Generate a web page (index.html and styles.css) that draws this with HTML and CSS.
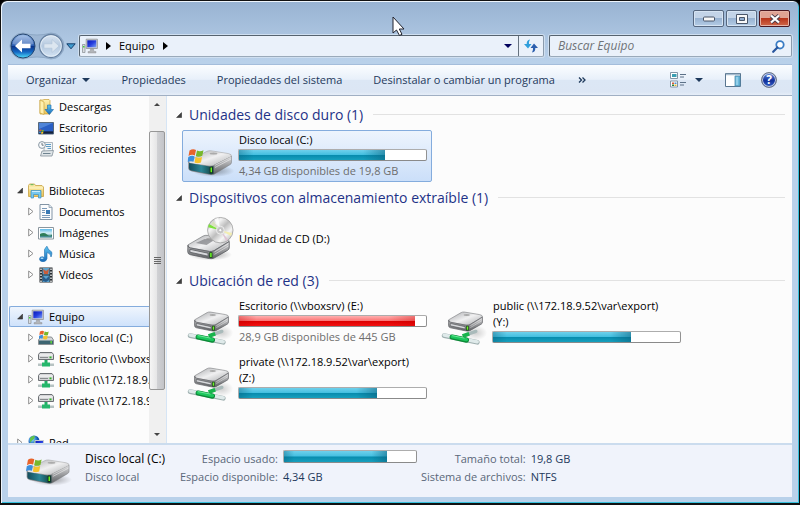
FILE: index.html
```html
<!DOCTYPE html>
<html lang="es">
<head>
<meta charset="utf-8">
<meta name="viewport" content="width=device-width, initial-scale=1">
<title>Equipo</title>
<link rel="stylesheet" href="styles.css">
</head>
<body>
<svg class="sprite" aria-hidden="true">
  <defs>
    <linearGradient id="silverTop" x1="0" y1="0" x2="1" y2="1"><stop offset="0" stop-color="#a5a7aa"/><stop offset=".5" stop-color="#f0f0f1"/><stop offset="1" stop-color="#a9abad"/></linearGradient>
    <linearGradient id="silverSide" x1="0" y1="0" x2="0" y2="1"><stop offset="0" stop-color="#dadadc"/><stop offset="1" stop-color="#5c5e61"/></linearGradient>
    <linearGradient id="teal" x1="0" y1="0" x2="1" y2="0"><stop offset="0" stop-color="#144c5c"/><stop offset=".5" stop-color="#2a8596"/><stop offset="1" stop-color="#123d3b"/></linearGradient>
    <linearGradient id="folder" x1="0" y1="0" x2="0" y2="1"><stop offset="0" stop-color="#fff2b4"/><stop offset="1" stop-color="#e8c257"/></linearGradient>
    <linearGradient id="screen" x1="0" y1="0" x2="1" y2="1"><stop offset="0" stop-color="#0a1bb5"/><stop offset=".5" stop-color="#263ee0"/><stop offset="1" stop-color="#7fa4f4"/></linearGradient>
    <linearGradient id="disc" x1="0" y1="0" x2="1" y2="1"><stop offset="0" stop-color="#aaa"/><stop offset=".3" stop-color="#f4f4f4"/><stop offset=".5" stop-color="#bdbdbd"/><stop offset=".7" stop-color="#f6f6f6"/><stop offset="1" stop-color="#a5a5a5"/></linearGradient>
    <linearGradient id="orb" x1="0" y1="0" x2="0" y2="1"><stop offset="0" stop-color="#8fb3e3"/><stop offset=".48" stop-color="#2b5cb0"/><stop offset=".5" stop-color="#0c3187"/><stop offset=".75" stop-color="#1468c4"/><stop offset="1" stop-color="#4fe0fb"/></linearGradient>
    <linearGradient id="orbOff" x1="0" y1="0" x2="0" y2="1"><stop offset="0" stop-color="#dbe6f2"/><stop offset=".5" stop-color="#b4c8df"/><stop offset="1" stop-color="#d4e4f4"/></linearGradient>
    <linearGradient id="blue" x1="0" y1="0" x2="0" y2="1"><stop offset="0" stop-color="#5fc4ef"/><stop offset="1" stop-color="#1769b8"/></linearGradient>
    <linearGradient id="landscape" x1="0" y1="0" x2="0" y2="1"><stop offset="0" stop-color="#5db9e8"/><stop offset=".5" stop-color="#d8f1f6"/><stop offset="1" stop-color="#176b72"/></linearGradient>
    <radialGradient id="shade"><stop offset="0" stop-color="#000" stop-opacity=".35"/><stop offset="1" stop-color="#000" stop-opacity="0"/></radialGradient>
    <radialGradient id="globeFill" cx=".35" cy=".35"><stop offset="0" stop-color="#8fe2ff"/><stop offset="1" stop-color="#0b53b0"/></radialGradient>
  </defs>

  <symbol id="flag" viewBox="0 0 16 16">
    <path d="M1.500 2.500Q5 .2 8 2L6.800 7.500Q4 6 .5 8Z" fill="#e8632a"/>
    <path d="M9 2.400Q12 4 15.500 2.200L14.300 7.800Q11 9.500 7.800 8Z" fill="#78b72c"/>
    <path d="M.3 9Q4 7 6.600 8.500L5.500 13.800Q3 12.500-.5 14Z" fill="#3c8fdc"/>
    <path d="M7.600 9Q11 10.500 14 8.900L13 14.400Q9.500 16 6.500 14.500Z" fill="#f6c32c"/>
  </symbol>
  <symbol id="drive" viewBox="0 0 48 30">
    <ellipse cx="27" cy="23" rx="21" ry="6" fill="url(#shade)"/>
    <path d="M2 13 20 3.500Q22 2.500 24 2.700L42 5.600Q45.500 6.300 45 8.500L27 17.500Q25 18.400 22 18L4 15.500Q1.500 15 2 13Z" fill="url(#silverTop)" stroke="#999" stroke-width=".5"/>
    <path d="M2 13.500Q2 15.300 4 15.600L23 18.300Q26 18.500 28 17L45 8.500V14.500Q45 16 43 17L28 26Q26 27 23.500 26.500L5 23Q2 22.300 2 20Z" fill="url(#silverSide)" stroke="#77797b" stroke-width=".5"/>
    <path d="M2.500 15 23 18.600Q25.500 18.800 27 18V25.700Q25 26.400 23 26L5 22.500Q2.500 22 2.500 20Z" fill="url(#teal)"/>
    <path d="M23.200 18.700 26 18.500V25L23.200 25.500Z" fill="#142b16"/><path d="M24 19.500h1.500v4.700H24Z" fill="#67f522"/>
    <path d="M28.500 17.300 44.500 9M28.500 19.500 44.500 11" stroke="#fff" stroke-width=".7" opacity=".7"/>
    <ellipse cx="27" cy="5.500" rx="4" ry="1.300" fill="#aaa" stroke="#ddd" stroke-width=".5"/>
    <use href="#flag" x="1" y="0" width="17" height="16"/>
  </symbol>
  <symbol id="caseBox" viewBox="0 0 46 26">
    <path d="M1.500 11 17 2Q19 1 21 1.300L40 4.500Q44 5.200 43.500 7.500L28 17Q26 18 23 17.600L4 14Q1 13.300 1.500 11Z" fill="url(#silverTop)" stroke="#828487" stroke-width=".8"/>
    <path d="M1.500 11.500Q1.500 13.700 4 14.200L23.500 17.800Q26 18 28 17L43.600 7.600V14Q43.600 15.500 42 16.500L28 24.500Q26 25.500 23.500 25L4 21Q1.300 20.500 1.300 18Z" fill="url(#silverSide)" stroke="#606266" stroke-width=".9"/>
    <path d="M3.500 15.500 22 19.500V22.500L3.500 18.500Z" fill="#d9dadd" stroke="#55575b" stroke-width=".8"/>
    <path d="M23.300 18.500h3.200v5.700h-3.200Z" fill="#174a12"/><path d="M24.100 19.300h1.600v4h-1.600Z" fill="#6df22a"/>
    <path d="M28.500 18.300 43 9.700M28.500 20.700 43 12" stroke="#fff" stroke-width=".7" opacity=".7"/>
    <ellipse cx="24" cy="5" rx="4" ry="1.200" fill="#aaa"/>
  </symbol>
  <symbol id="cd" viewBox="0 0 50 46">
    <ellipse cx="25" cy="39" rx="22" ry="6" fill="url(#shade)"/>
    <use href="#caseBox" x="0" y="18" width="47" height="26"/>
    <path d="m10 27 9-4 10 1-8 5Z" fill="#7c7e81" opacity=".7"/>
    <circle cx="35" cy="14" r="13" fill="url(#disc)" stroke="#9c9c9c" stroke-width=".8"/>
    <path d="M35 14 25.500 8.500 28 5Z" fill="#d9dfc0"/><path d="M35 14 22.500 11 23.500 7.700Z" fill="#7de13b"/><path d="M35 14 47 17 46 20Z" fill="#f3eeb0"/><path d="M35 14 43 23.500 41 25Z" fill="#dfc4d4"/><path d="M35 14 29 3l4-2Z" fill="#fff" opacity=".8"/>
    <circle cx="35" cy="14" r="4" fill="#c8c8c8" stroke="#eee"/><circle cx="35" cy="14" r="1.600" fill="#fff" stroke="#999" stroke-width=".5"/>
  </symbol>
  <symbol id="netDrive" viewBox="0 0 48 38">
    <ellipse cx="36" cy="23" rx="12" ry="8" fill="url(#shade)" opacity=".5"/>
    <path d="m26 25 10-3.500" stroke="#a9baba" stroke-width="3.500" stroke-linecap="round"/>
    <path d="m22 26.500 7-2.500" stroke="#18b44c" stroke-width="4"/>
    <use href="#caseBox" x="6" y="0" width="39" height="22"/>
    <path d="m2.500 26 35 7" stroke="#9fb0b0" stroke-width="5" stroke-linecap="round"/>
    <path d="m2.500 25.500 35 7" stroke="#dfeaea" stroke-width="3.500" stroke-linecap="round"/>
    <path d="m11 27.500 15 3.200" stroke="#0c8a37" stroke-width="5.500" stroke-linecap="round"/>
    <path d="m11 27 15 3.200" stroke="#1cc75d" stroke-width="3.500" stroke-linecap="round"/>
    <path d="m11 26 13 2.600" stroke="#86f0a9" stroke-width=".8"/>
  </symbol>
  <symbol id="computer" viewBox="0 0 16 16">
    <path d="M.5 6.500h2.500v8H.5Z" fill="#d8dce0" stroke="#858b91" stroke-width=".7"/><path d="M1 8h1.500v1.500H1Z" fill="#42d434"/>
    <path d="M4.200 1.200h11.200v9.300H4.200Z" fill="#d0d1d3" stroke="#8e9297" stroke-width=".8"/>
    <path d="M5.300 2.300h9v7h-9Z" fill="url(#screen)"/>
    <path d="M8.500 11h3l.5 2.500h2V15H6v-1.500h2Z" fill="#b2b5b9" stroke="#888b8f" stroke-width=".4"/>
  </symbol>
  <symbol id="downloads" viewBox="0 0 16 16">
    <path d="M2 1h3l1-.5h5l1 1V15H2Z" fill="url(#folder)" stroke="#c79d35" stroke-width=".7"/>
    <path d="m2 1 4 2v12.500L2 14Z" fill="#fff0ae" stroke="#cda640" stroke-width=".7"/>
    <path d="M9.500 6h3.500v4.500h2.500L11.300 15.500 7 10.500h2.500Z" fill="url(#blue)" stroke="#1965a8" stroke-width=".6"/>
  </symbol>
  <symbol id="desktop" viewBox="0 0 16 16">
    <path d="M.5 2.500h15v11.500H.5Z" fill="#1a3574" stroke="#56687c"/><path d="M1 3h14v8.500H1Z" fill="#2a5fc4"/>
    <path d="M1 3h14L1 9Z" fill="#7cb2ef" opacity=".45"/><path d="M1 11.500h14v2H1Z" fill="#15223a"/><use href="#flag" x="1" y="9" width="5" height="5"/>
  </symbol>
  <symbol id="recent" viewBox="0 0 16 16">
    <path d="M6 1.500h8.500v9H6Z" fill="#f1f4f6" stroke="#9aa5ae" stroke-width=".8"/>
    <path d="M8 3.500h5M8 5.500h5M9.500 7.500h3.500" stroke="#5c9bc4"/>
    <path d="m4 10 11.500-.5L14 15H2.500Z" fill="#dfe5e8" stroke="#84919a" stroke-width=".8"/><path d="M5 12.500h7.500" stroke="#6f8390"/>
    <circle cx="4" cy="4" r="3.400" fill="#f8fafc" stroke="#8997a2"/><path d="M4 2v2.200h1.700" fill="none" stroke="#4b5963" stroke-width=".8"/>
  </symbol>
  <symbol id="libraries" viewBox="0 0 16 16">
    <path d="M.5 2.500 1.500 1h5L7.500 2.500H14L15.500 4v9.500H.5Z" fill="url(#folder)" stroke="#c6a142" stroke-width=".8"/>
    <path d="M1 5h14" stroke="#fff8d0"/><path d="M2.500 1.700h3" stroke="#5ab658"/>
    <path d="M3 7.500h10V15h-2.500v-3.500h-5V15H3Z" fill="#76c8ef" stroke="#398fc4" stroke-width=".7"/><path d="M4 8.500h8" stroke="#cbeefe"/>
  </symbol>
  <symbol id="documents" viewBox="0 0 16 16">
    <path d="M2 .5h9L14 3.500v12H2Z" fill="#fbfcfd" stroke="#8294a5"/><path d="M11 .5v3h3" fill="#dbe5ee" stroke="#8294a5" stroke-width=".7"/>
    <path d="M4 4.500h5M4 6.500h3M4 11.500h8M4 13.500h8" stroke="#7b99b8"/><path d="M8 6h4v4H8Z" fill="#3979b5"/><path d="M4 8.500h3" stroke="#7b99b8"/>
  </symbol>
  <symbol id="pictures" viewBox="0 0 16 16">
    <path d="M.5 2.500h15v11.500H.5Z" fill="#fff" stroke="#8b969e"/><path d="M2 4h12v8.500H2Z" fill="url(#landscape)"/>
    <path d="M2 9Q6 7 9 9.500T14 9.500V11H2Z" fill="#2e7d59"/>
  </symbol>
  <symbol id="music" viewBox="0 0 16 16">
    <path d="M6.500 11.500V3.500L8.500.5h.7Q10 4 12.500 5T13 11Q13 7.500 9 6.500v6Q8.500 15.500 5 15.700 1.500 15.500 1.500 13T4.500 10.700Z" fill="url(#blue)" stroke="#1c6fb0" stroke-width=".6"/>
    <ellipse cx="4" cy="12.200" rx="1.500" ry=".8" fill="#b5e5fb"/>
  </symbol>
  <symbol id="videos" viewBox="0 0 16 16">
    <path d="M1.500.500h13v15h-13Z" fill="#292d31"/><path d="M4.500 1h7v6.500h-7ZM4.500 8.500h7V15h-7Z" fill="#5ca4cf"/>
    <path d="m5 2 3 2 3-2-1 5H6Z" fill="#c95d3a"/><path d="m5 9 3 3 3-3v4l-3 2-3-1Z" fill="#275c8c"/>
    <path d="M3 1.500v14M13 1.500v14" stroke="#e5e7e8" stroke-width="1.500" stroke-dasharray="1.500 1.500"/>
  </symbol>
  <symbol id="smallDrive" viewBox="0 0 16 16">
    <path d="m.5 10 2-3h11l2 3v4.500H.5Z" fill="#d2d4d6" stroke="#747a7e" stroke-width=".8"/><path d="M1 10.500h14V14H1Z" fill="#3c6471"/><path d="M12.500 11h1.300v2.500h-1.300Z" fill="#67ed32"/><use href="#flag" x="1" y="0" width="10" height="10"/>
  </symbol>
  <symbol id="smallNet" viewBox="0 0 16 16">
    <path d="m.5 3.500 1.500-2h12l1.500 2v5H.5Z" fill="#d5d6d8" stroke="#6c7074"/><path d="M1.500 4h13" stroke="#fff"/><path d="M2 6.500h8" stroke="#898c8f"/><path d="M11.500 5.500h2v1.800h-2Z" fill="#30b628"/>
    <path d="M6.500 9h3v3h-3Z" fill="#22af66"/><path d="M0 12.500h16V15H0Z" fill="#b6c2c2"/><path d="M4 11.500h8v4H4Z" fill="#25b76c"/>
  </symbol>
  <symbol id="network" viewBox="0 0 16 16">
    <circle cx="6" cy="6" r="5.500" fill="url(#globeFill)"/><path d="M2 3q3-3 5-2L6 4 3.500 6 2 8ZM6 6l3 1-2 4Z" fill="#61c34a"/>
    <path d="M7 5.500h8.500v7H7Z" fill="url(#screen)" stroke="#c4cbd3"/><path d="M9 13h5v2H9Z" fill="#aab0b7"/>
  </symbol>
  <symbol id="open" viewBox="0 0 7 7"><path d="M6.500.7V6.500H.7Z" fill="#404040" stroke="#222" stroke-width=".6"/></symbol>
  <symbol id="closed" viewBox="0 0 6 9"><path d="M.7 1 5 4.500.7 8Z" fill="#fff" stroke="#8f8f8f"/></symbol>
  <symbol id="down" viewBox="0 0 8 4"><path d="M0 0h8L4 4Z" fill="currentColor"/></symbol>
  <symbol id="right" viewBox="0 0 5 8"><path d="M0 0 5 4 0 8Z" fill="currentColor"/></symbol>
</svg>

<div class="window">
  <header class="titlebar">
    <div class="caption">
      <button class="cap" aria-label="Minimizar"><svg width="12" height="6" viewBox="0 0 12 6"><rect x=".5" y="1" width="11" height="4" rx="1" fill="#f8f8f8" stroke="#4a5669"/></svg></button>
      <button class="cap" aria-label="Maximizar"><svg width="12" height="10" viewBox="0 0 12 10"><path d="M.5.500h11v9H.5Z" fill="#f8f8f8" stroke="#4a5669"/><path d="M3.500 3.500h5v3h-5Z" fill="#92aed0" stroke="#4a5669"/></svg></button>
      <button class="cap close" aria-label="Cerrar"><svg width="12" height="10" viewBox="0 0 12 10"><path d="m2 1.500 8 7M10 1.500l-8 7" stroke="#4b3d4b" stroke-width="4"/><path d="m2 1.500 8 7M10 1.500l-8 7" stroke="#fff" stroke-width="2.300"/></svg></button>
    </div>
  </header>
  <svg class="pointer" viewBox="0 0 13 20" aria-hidden="true"><path d="M1 1v16l3.500-3 3 5.500 2.500-1.200L7.300 13H12Z" fill="#fff" stroke="#20232e"/></svg>

  <div class="navrow">
    <div class="history">
      <svg class="orbs" viewBox="0 0 56 28" aria-hidden="true">
        <path d="M14 1Q28 5 42 1a12.500 12.500 0 0 1 0 26Q28 23 14 27A13 13 0 0 1 14 1Z" fill="#9bb4d1" stroke="#7f9ab9" stroke-width=".8" opacity=".8"/>
        <circle cx="14" cy="14" r="12" fill="url(#orb)" stroke="#26466f"/><path d="M3.500 12A10.700 10.700 0 0 1 24.500 12Q14 15.500 3.500 12Z" fill="#fff" opacity=".25"/>
        <path d="m6 14 7-6.500v4.300h8.500v4.400H13v4.300Z" fill="#fff"/>
        <circle cx="42" cy="14" r="11.500" fill="url(#orbOff)" stroke="#657f9f" stroke-width="1.300"/><circle cx="42" cy="14" r="10.300" fill="none" stroke="#e9f1f9" opacity=".8"/>
        <path d="m50 14-7-6.500v4.300h-8v4.400h8v4.300Z" fill="#dce6f0" stroke="#b0c3d8" stroke-width=".6"/>
      </svg>
      <button class="plain" aria-label="Páginas recientes"><svg width="10" height="7" viewBox="0 0 10 7"><path d="M.8.800h8.400L5 5.800Z" fill="#3f9cd0" stroke="#163f6c"/></svg></button>
    </div>
    <div class="address">
      <nav class="crumbs" aria-label="Ruta">
        <svg class="i16" aria-hidden="true"><use href="#computer"/></svg>
        <svg class="arrow" aria-hidden="true"><use href="#right"/></svg>
        <a href="#equipo">Equipo</a>
        <svg class="arrow" aria-hidden="true"><use href="#right"/></svg>
      </nav>
      <button class="plain drop" aria-label="Ubicaciones anteriores"><svg class="caret"><use href="#down"/></svg></button>
      <button class="plain refresh" aria-label="Actualizar"><svg width="14" height="14" viewBox="0 0 14 14"><path d="M6 .5Q2.500 1 2.700 5H0l4 4.500L7.500 5H5Q4.700 2.500 6 .5Z" fill="#2f9fdc"/><path d="M8 13.500Q11.500 13 11.300 9H14l-4-4.500L6.500 9H9q.3 2.500-1 4.500Z" fill="#2c5fae"/></svg></button>
    </div>
    <form class="search">
      <input type="search" placeholder="Buscar Equipo" aria-label="Buscar Equipo">
      <svg width="13" height="13" viewBox="0 0 13 13" aria-hidden="true"><circle cx="8" cy="4.800" r="3.700" fill="#fff" stroke="#3a7cc4" stroke-width="1.800"/><path d="M5.400 7.500 1.200 11.800" stroke="#28569e" stroke-width="2.200" stroke-linecap="round"/></svg>
    </form>
  </div>

  <div class="client">
    <div class="toolbar" role="toolbar" aria-label="Comandos">
      <button class="cmd">Organizar <svg class="caret"><use href="#down"/></svg></button>
      <button class="cmd">Propiedades</button>
      <button class="cmd">Propiedades del sistema</button>
      <button class="cmd">Desinstalar o cambiar un programa</button>
      <button class="cmd more" aria-label="Más comandos"><svg width="8" height="6" viewBox="0 0 8 6"><path d="m1 .5 2.500 2.500L1 5.500M4.500.5 7 3 4.500 5.500" fill="none" stroke="#1e395b" stroke-width="1.300"/></svg></button>
      <div class="tools">
        <button class="plain view" aria-label="Cambiar la vista">
          <svg width="16" height="16" viewBox="0 0 16 16"><path d="M.5.500h7v6h-7ZM.5 9h7v6h-7Z" fill="#fff" stroke="#8295a6"/><path d="M2 2h4.500v3H2Z" fill="#3b9eb2"/><path d="M2 10.500h2V12H2Z" fill="#d85835"/><path d="M4.500 10.500h2V12h-2Z" fill="#4a8fd4"/><path d="M2 12.500h2V14H2Z" fill="#2a7e36"/><path d="M4.500 12.500h2V14h-2Z" fill="#e9b52f"/><path d="M10 2.500h6M10 5h4M10 10.500h6M10 13h4" stroke="#5c7188"/></svg>
          <svg class="caret"><use href="#down"/></svg>
        </button>
        <button class="plain" aria-label="Panel de vista previa"><svg width="16" height="14" viewBox="0 0 16 14"><path d="M.5.500h15v13H.5Z" fill="#fff" stroke="#59758f"/><path d="M1 1.500h14" stroke="#a7bccf" stroke-width="1.500"/><path d="M10 3h5v10h-5Z" fill="#6bb9dc" stroke="#4d8bac" stroke-width=".8"/><path d="M12 4v8" stroke="#b9e4f5"/></svg></button>
        <button class="plain help" aria-label="Ayuda">?</button>
      </div>
    </div>

    <div class="body">
      <aside class="side">
        <nav class="tree" aria-label="Panel de navegación">
          <a class="row leaf" href="#"><svg class="i16"><use href="#downloads"/></svg>Descargas</a>
          <a class="row leaf" href="#"><svg class="i16"><use href="#desktop"/></svg>Escritorio</a>
          <a class="row leaf space" href="#"><svg class="i16"><use href="#recent"/></svg>Sitios recientes</a>
          <a class="row top" href="#"><svg class="twist"><use href="#open"/></svg><svg class="i16"><use href="#libraries"/></svg>Bibliotecas</a>
          <a class="row" href="#"><svg class="twist"><use href="#closed"/></svg><svg class="i16"><use href="#documents"/></svg>Documentos</a>
          <a class="row" href="#"><svg class="twist"><use href="#closed"/></svg><svg class="i16"><use href="#pictures"/></svg>Imágenes</a>
          <a class="row" href="#"><svg class="twist"><use href="#closed"/></svg><svg class="i16"><use href="#music"/></svg>Música</a>
          <a class="row space" href="#"><svg class="twist"><use href="#closed"/></svg><svg class="i16"><use href="#videos"/></svg>Vídeos</a>
          <a class="row top current" href="#equipo" aria-current="page"><svg class="twist"><use href="#open"/></svg><svg class="i16"><use href="#computer"/></svg>Equipo</a>
          <a class="row" href="#"><svg class="twist"><use href="#closed"/></svg><svg class="i16"><use href="#smallDrive"/></svg>Disco local (C:)</a>
          <a class="row" href="#"><svg class="twist"><use href="#closed"/></svg><svg class="i16"><use href="#smallNet"/></svg>Escritorio (\\vboxsrv) (E:)</a>
          <a class="row" href="#"><svg class="twist"><use href="#closed"/></svg><svg class="i16"><use href="#smallNet"/></svg>public (\\172.18.9.52\var\export) (Y:)</a>
          <a class="row space" href="#"><svg class="twist"><use href="#closed"/></svg><svg class="i16"><use href="#smallNet"/></svg>private (\\172.18.9.52\var\export) (Z:)</a>
          <a class="row top" href="#"><svg class="twist"><use href="#closed"/></svg><svg class="i16"><use href="#network"/></svg>Red</a>
        </nav>
        <div class="scroll" aria-hidden="true">
          <span class="step"><svg width="6" height="3" viewBox="0 0 6 3"><path d="M0 3h6L3 0Z" fill="#444"/></svg></span>
          <span class="before"></span>
          <span class="thumb"><i></i><i></i><i></i><i></i></span>
          <span class="after"></span>
          <span class="step"><svg width="6" height="3" viewBox="0 0 6 3"><path d="M0 0h6L3 3Z" fill="#444"/></svg></span>
        </div>
      </aside>

      <main class="files" id="equipo">
        <section>
          <h2><svg class="twist"><use href="#open"/></svg>Unidades de disco duro (1)</h2>
          <div class="tiles">
            <article class="tile selected">
              <svg class="pic" viewBox="0 0 48 46"><use href="#drive" x="0" y="15" width="48" height="30"/></svg>
              <div class="info"><h3>Disco local (C:)</h3><div class="bar"><div class="fill" style="width:78%"></div></div><p>4,34 GB disponibles de 19,8 GB</p></div>
            </article>
          </div>
        </section>
        <section>
          <h2><svg class="twist"><use href="#open"/></svg>Dispositivos con almacenamiento extraíble (1)</h2>
          <div class="tiles">
            <article class="tile">
              <svg class="pic" viewBox="0 0 50 46"><use href="#cd" width="50" height="46"/></svg>
              <div class="info"><h3>Unidad de CD (D:)</h3></div>
            </article>
          </div>
        </section>
        <section>
          <h2><svg class="twist"><use href="#open"/></svg>Ubicación de red (3)</h2>
          <div class="tiles">
            <article class="tile">
              <svg class="pic" viewBox="0 0 48 46"><use href="#netDrive" x="0" y="12" width="48" height="36"/></svg>
              <div class="info"><h3>Escritorio (\\vboxsrv) (E:)</h3><div class="bar"><div class="fill full" style="width:94%"></div></div><p>28,9 GB disponibles de 445 GB</p></div>
            </article>
            <article class="tile">
              <svg class="pic" viewBox="0 0 48 46"><use href="#netDrive" x="0" y="12" width="48" height="36"/></svg>
              <div class="info"><h3>public (\\172.18.9.52\var\export) (Y:)</h3><div class="bar"><div class="fill" style="width:74%"></div></div></div>
            </article>
            <article class="tile">
              <svg class="pic" viewBox="0 0 48 46"><use href="#netDrive" x="0" y="12" width="48" height="36"/></svg>
              <div class="info"><h3>private (\\172.18.9.52\var\export) (Z:)</h3><div class="bar"><div class="fill" style="width:74%"></div></div></div>
            </article>
          </div>
        </section>
      </main>
    </div>

    <footer class="details">
      <svg class="preview" viewBox="0 0 48 30" aria-hidden="true"><use href="#drive"/></svg>
      <div class="name"><strong>Disco local (C:)</strong><span>Disco local</span></div>
      <dl class="used">
        <dt>Espacio usado:</dt><dd><div class="bar"><div class="fill" style="width:78%"></div></div></dd>
        <dt>Espacio disponible:</dt><dd>4,34 GB</dd>
      </dl>
      <dl>
        <dt>Tamaño total:</dt><dd>19,8 GB</dd>
        <dt>Sistema de archivos:</dt><dd>NTFS</dd>
      </dl>
    </footer>
  </div>
</div>
</body>
</html>
```
FILE: styles.css
```css
* { box-sizing: border-box; }

body {
  margin: 0;
  background: #000;
  color: #000;
  font: 11px/16px "Open Sans", "Noto Sans", sans-serif;
}

h2, h3, p, dl, dd { margin: 0; }
a { color: inherit; text-decoration: none; }
button { font: inherit; color: inherit; }
svg { flex: none; }

.sprite { position: absolute; width: 0; height: 0; }

.window {
  position: relative;
  display: flex;
  flex-direction: column;
  height: 100vh;
  padding: 0 6px 6px;
  border: 1px solid #111;
  border-width: 1px 1px 2px;
  border-radius: 7px 7px 0 0;
  background: linear-gradient(#98b3d2, #b9d1ea 60px);
  box-shadow: inset 1px 1px #eef5fc, inset -1px -1px #36c0dc;
}

.pointer { position: absolute; left: 391px; top: 15px; width: 13px; height: 20px; }

/* title bar */
.titlebar { display: flex; justify-content: flex-end; padding: 9px 3px 7px; }
.caption { display: flex; gap: 2px; }
.cap {
  display: flex;
  align-items: center;
  justify-content: center;
  width: 31px;
  height: 17px;
  padding: 0;
  border: 1px solid #56677f;
  border-radius: 2px;
  background: linear-gradient(#c3d4e8 48%, #98b3d2 50%, #b4cce6);
  box-shadow: inset 0 0 0 1px #d6e4f3;
}
.cap.close {
  border-color: #4c1720;
  background: linear-gradient(#e0a394 45%, #b8351c 50%, #d0684a);
  box-shadow: inset 0 0 0 1px #e5b2a6;
}

/* address row */
.navrow { display: flex; align-items: center; height: 24px; gap: 3px; margin-bottom: 6px; }
.history { display: flex; align-items: center; gap: 1px; margin-left: 2px; }
.orbs { width: 56px; height: 28px; }
.plain {
  display: flex;
  align-items: center;
  justify-content: center;
  padding: 0;
  border: 0;
  background: none;
}
.address, .search {
  display: flex;
  align-items: center;
  height: 22px;
  border: 1px solid #65727f;
  border-color: #56636f #8b9bad #9aaaba #56636f;
  border-radius: 2px;
  background: #eaf1fa;
  box-shadow: 0 0 0 1px #cfdff0;
}
.address { flex: 1; }
.crumbs { display: flex; flex: 1; align-items: center; gap: 8px; padding-left: 2px; }
.arrow { width: 5px; height: 8px; }
.caret { width: 8px; height: 4px; }
.drop { width: 20px; color: #00005c; }
.refresh { width: 25px; height: 20px; border-left: 1px solid #65727f; }
.search { width: 243px; margin: 0 1px 0 2px; padding: 0 6px 0 8px; }
.search input {
  flex: 1;
  min-width: 0;
  padding: 0;
  border: 0;
  outline: 0;
  background: none;
  font: italic 12px/16px "Open Sans", "Noto Sans", sans-serif;
}
.search input::placeholder { color: #707478; opacity: 1; }

.i16 { width: 16px; height: 16px; }

/* client area */
.client {
  display: flex;
  flex: 1;
  flex-direction: column;
  min-height: 0;
  margin: 0 1px;
  background: #fcfcfc;
}
.toolbar {
  display: flex;
  align-items: center;
  height: 32px;
  padding: 0 15px 0 6px;
  border-top: 1px solid #a4bddb;
  border-bottom: 1px solid #a0afc3;
  background: linear-gradient(#fbfdff, #e8f0fa 48%, #dce7f5 50%, #dce6f4 90%, #e6eef8);
  color: #1e395b;
}
.cmd {
  display: flex;
  align-items: center;
  gap: 6px;
  margin-right: 7px;
  padding: 0 12px;
  border: 0;
  background: none;
  white-space: nowrap;
}
.cmd.more { padding: 0 4px; }
.tools { display: flex; gap: 20px; align-items: center; margin-left: auto; }
.view { gap: 9px; margin-right: 2px; }
.help {
  width: 16px;
  height: 16px;
  border: 1px solid #6d7688;
  border-radius: 50%;
  background: linear-gradient(#5a86dd, #12309a 55%, #3461c8);
  box-shadow: inset 0 0 0 1px #c5cce0;
  color: #fff;
  font-size: 12px;
  font-weight: 700;
}

.body { display: flex; flex: 1; min-height: 0; }

/* navigation pane */
.side { display: flex; width: 159px; border-right: 1px solid #d6e5f5; }
.tree { flex: 1; min-width: 0; padding-left: 1px; overflow: hidden; }
.row {
  display: flex;
  align-items: center;
  gap: 5px;
  height: 21px;
  padding-left: 18px;
  border: 1px solid transparent;
  border-right: 0;
  white-space: nowrap;
}
.row.top { padding-left: 7px; }
.row.leaf { padding-left: 28px; }
.row.space { margin-bottom: 21px; }
.row.current {
  border-color: #84acdd;
  border-radius: 2px 0 0 2px;
  background: linear-gradient(#eff5fd, #cfe2fb);
}
.row .twist { width: 6px; height: 9px; margin-right: -1px; }
.row.top .twist { margin-right: 0; }
.scroll { display: flex; flex-direction: column; width: 17px; padding-right: 1px; background: #f0f0f0; }
.step { display: flex; align-items: center; justify-content: center; height: 17px; }
.before { flex: 18; }
.after { flex: 36; }
.thumb {
  display: flex;
  flex: 260;
  flex-direction: column;
  align-items: center;
  justify-content: center;
  gap: 1px;
  border: 1px solid #979797;
  border-radius: 2px;
  background: linear-gradient(90deg, #f5f5f5, #e6e6e7 48%, #d0d1d4 52%, #c3c4c8);
}
.thumb i { width: 7px; height: 1px; background: #666; }

/* drive list */
.files { flex: 1; min-width: 0; padding: 3px 7px 0 9px; overflow: hidden; }
.files h2 {
  display: flex;
  align-items: center;
  gap: 7px;
  height: 31px;
  color: #1e3287;
  font-size: 14px;
  font-weight: 400;
  white-space: nowrap;
}
.files h2::after { content: ""; flex: 1; height: 1px; margin-left: 3px; background: #e2e2e2; }
.files h2 .twist { width: 6px; height: 6px; }
.tiles { display: grid; grid-template-columns: repeat(auto-fill, 250px); gap: 4px; padding-left: 6px; }
.tile {
  display: flex;
  align-items: center;
  gap: 3px;
  height: 52px;
  padding: 0 4px 0 3px;
  border: 1px solid transparent;
  border-radius: 2px;
}
.tile.selected {
  border-color: #84acdd;
  background: linear-gradient(#edf4fd, #cbdff9);
}
.pic { width: 49px; height: 46px; }
.info { flex: 1; min-width: 0; padding-bottom: 1px; }
.info h3 { padding: 0 12px 0 1px; font-size: 11px; font-weight: 400; }
.info p { padding: 0 1px; color: #6d6d6d; }
.bar {
  height: 12px;
  margin: 1px 0 2px;
  border: 1px solid #929292;
  border-color: #adadad #929292 #8a8a8a #adadad;
  border-radius: 2px;
  background: #fff;
}
.fill {
  height: 100%;
  background:
    linear-gradient(90deg, #0a5f7c66, transparent 10% 85%, #0a5f7c88),
    linear-gradient(#6fd0ec, #43bfe0 48%, #078bad 52%, #17a0be);
}
.fill.full {
  background:
    linear-gradient(90deg, #c4000055, transparent 10% 85%, #c4000055),
    linear-gradient(#ffb0b0, #fb7474 48%, #dc0000 52%, #f31212);
}

/* details pane */
.details {
  display: flex;
  align-items: flex-start;
  height: 54px;
  padding: 5px 17px 0;
  border-top: 2px solid #cbdcee;
  background: #f0f3fb;
  color: #1e395b;
  line-height: 18px;
}
.preview { width: 47px; height: 30px; margin-top: 7px; }
.name { display: grid; grid-auto-rows: 18px; width: 95px; margin-left: 13px; white-space: nowrap; }
.name strong { color: #000; font-size: 12px; font-weight: 400; }
.name span, .details dt { color: #5a6779; }
.details dl {
  display: grid;
  grid-template-columns: auto auto;
  grid-auto-rows: 18px;
  column-gap: 5px;
  white-space: nowrap;
}
.details dt { text-align: right; }
.details .used { grid-template-columns: auto 134px; margin-right: 4px; }
.details .bar { height: 13px; margin: 0; }
```
